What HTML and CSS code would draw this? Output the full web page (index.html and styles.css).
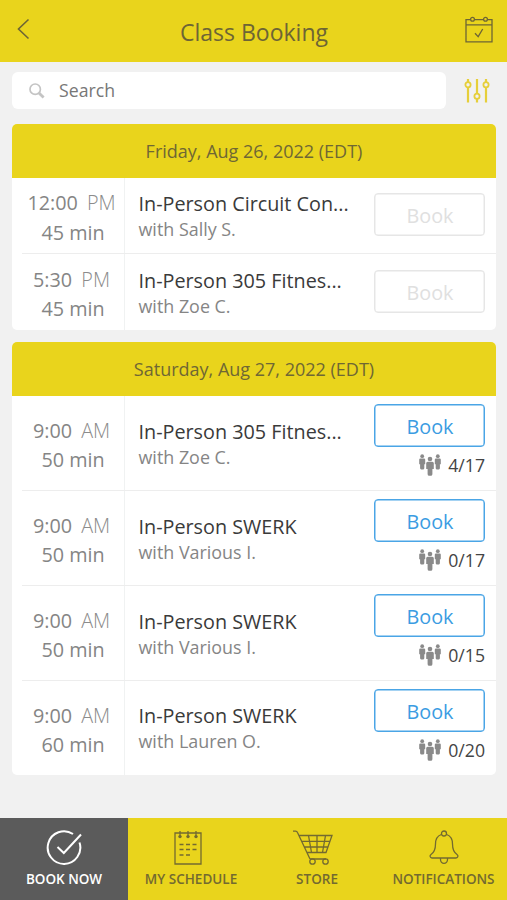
FILE: index.html
```html
<!DOCTYPE html>
<html lang="en">
<head>
<meta charset="utf-8">
<title>Class Booking</title>
<link rel="stylesheet" href="styles.css">
</head>
<body>
<svg class="defs" width="0" height="0">
  <symbol id="people" viewBox="0 0 22 22">
    <g><circle cx="3.2" cy="2.200" r="1.900"/><path d="M1.400 4.400h3.600q1.200 0 1.200 1.200v4.600H5.300V14q0 1.400-1 1.400H2.100q-1 0-1-1.400v-3.800H.200V5.600q0-1.200 1.200-1.200z"/></g>
    <g transform="translate(15.6 0)"><circle cx="3.2" cy="2.200" r="1.900"/><path d="M1.400 4.400h3.600q1.200 0 1.200 1.200v4.600H5.300V14q0 1.400-1 1.400H2.100q-1 0-1-1.400v-3.800H.200V5.600q0-1.200 1.200-1.200z"/></g>
    <circle cx="11" cy="5" r="2.3"/><path d="M8.700 7.800h4.600q1.500 0 1.500 1.500V15h-1.400v5q0 1.800-1.200 1.800H9.800q-1.200 0-1.200-1.800v-5H7.200V9.300q0-1.500 1.500-1.500z"/>
  </symbol>
</svg>
<div class="app">
  <header class="topbar">
    <svg class="back" viewBox="0 0 14 22"><path d="M11.500 1.500 1.500 11l10 9.500"/></svg>
    <h1>Class Booking</h1>
    <svg class="cal" viewBox="0 0 28 28"><path d="M5.500 3.700H1v22.200h26V3.700h-4.500M9.500 3.700h9M1 8.800h26M10 17.200l3.200 3.400 4.500-7.600"/><circle cx="7.500" cy="3.300" r="1.900"/><circle cx="20.500" cy="3.300" r="1.900"/></svg>
  </header>
  <div class="searchrow">
    <div class="search">
      <svg viewBox="0 0 16 16"><circle cx="6.200" cy="6.200" r="5.200"/><path class="handle" d="m10 10 4.600 4.600"/></svg>
      <span>Search</span>
    </div>
    <svg class="filter" viewBox="0 0 26 26"><path d="M4 1v3M4 9.500v15M13 1v14.500M13 21v3.500M22 1v3M22 9.500v15"/><circle cx="4" cy="6.700" r="2.600"/><circle cx="13" cy="18.200" r="2.600"/><circle cx="22" cy="6.700" r="2.600"/></svg>
  </div>
  <section class="card">
    <h2>Friday, Aug 26, 2022 (EDT)</h2>
    <div class="row short">
      <div class="time"><div>12:00 <span class="ampm">PM</span></div><div>45 min</div></div>
      <div class="info"><div class="name">In-Person Circuit Con...</div><div class="who">with Sally S.</div></div>
      <div class="action"><button class="book off">Book</button></div>
    </div>
    <div class="row short">
      <div class="time"><div>5:30 <span class="ampm">PM</span></div><div>45 min</div></div>
      <div class="info"><div class="name">In-Person 305 Fitnes...</div><div class="who">with Zoe C.</div></div>
      <div class="action"><button class="book off">Book</button></div>
    </div>
  </section>
  <section class="card">
    <h2>Saturday, Aug 27, 2022 (EDT)</h2>
    <div class="row">
      <div class="time"><div>9:00 <span class="ampm">AM</span></div><div>50 min</div></div>
      <div class="info"><div class="name">In-Person 305 Fitnes...</div><div class="who">with Zoe C.</div></div>
      <div class="action"><button class="book">Book</button><div class="count"><svg><use href="#people"/></svg>4/17</div></div>
    </div>
    <div class="row">
      <div class="time"><div>9:00 <span class="ampm">AM</span></div><div>50 min</div></div>
      <div class="info"><div class="name">In-Person SWERK</div><div class="who">with Various I.</div></div>
      <div class="action"><button class="book">Book</button><div class="count"><svg><use href="#people"/></svg>0/17</div></div>
    </div>
    <div class="row">
      <div class="time"><div>9:00 <span class="ampm">AM</span></div><div>50 min</div></div>
      <div class="info"><div class="name">In-Person SWERK</div><div class="who">with Various I.</div></div>
      <div class="action"><button class="book">Book</button><div class="count"><svg><use href="#people"/></svg>0/15</div></div>
    </div>
    <div class="row">
      <div class="time"><div>9:00 <span class="ampm">AM</span></div><div>60 min</div></div>
      <div class="info"><div class="name">In-Person SWERK</div><div class="who">with Lauren O.</div></div>
      <div class="action"><button class="book">Book</button><div class="count"><svg><use href="#people"/></svg>0/20</div></div>
    </div>
  </section>
  <nav class="tabs">
    <div class="tab active">
      <svg viewBox="0 0 42 36"><path d="M30 4A16.300 16.300 0 1 0 36.500 12.500" class="thick"/><path class="thick" d="m14.500 17 6.300 6L38 4.500"/></svg>
      <span>BOOK NOW</span>
    </div>
    <div class="tab schedule">
      <svg viewBox="0 0 42 36"><path d="M8 3h26v31H8z"/><path d="M13 1v6M21 1v6M29 1v6M12.500 14.500h4M19 14.500h4M25.500 14.500h4M12.500 19.500h4M19 19.500h4M25.500 19.500h4M12.500 25h4M19 25h4"/><g class="dots"><circle cx="13" cy="6.600" r="1.700"/><circle cx="21" cy="6.600" r="1.700"/><circle cx="29" cy="6.600" r="1.700"/></g></svg>
      <span>MY SCHEDULE</span>
    </div>
    <div class="tab store">
      <svg viewBox="0 0 42 36"><path d="M1 1.200h2.500q1.500 0 2 1.300L18 29M7 5.500h33l-6 17H15M9.500 11.300h28.500M12.200 17h23.800M16.500 5.500l3 17M25 5.500v17M33.500 5.500l-3 17M18 29h16"/><circle cx="20.500" cy="31.500" r="2.700"/><circle cx="33.500" cy="31.500" r="2.700"/></svg>
      <span>STORE</span>
    </div>
    <div class="tab bell">
      <svg viewBox="0 0 42 36"><path d="M18.300 4.500C14 6 12.500 9 12.500 14c0 6-1.500 8.500-4.500 10.500-1.600 1.200-1 3.500 1 3.500h24c2 0 2.600-2.300 1-3.500-3-2-4.500-4.500-4.500-10.500 0-5-1.500-8-5.800-9.500M17.500 28v1.500a3.500 3.800 0 0 0 7 0V28"/><circle cx="21" cy="3.500" r="2.500"/></svg>
      <span>NOTIFICATIONS</span>
    </div>
  </nav>
</div>
</body>
</html>
```
FILE: styles.css
```css
* { box-sizing: border-box; }
body { margin: 0; background: #f1f1f1; font-family: "Open Sans", sans-serif; }
h1, h2 { margin: 0; font-weight: 400; }
svg { display: block; flex: none; fill: none; stroke: currentColor; }
.defs { position: absolute; }
.app { width: 507px; height: 900px; display: flex; flex-direction: column; overflow: hidden; }

.topbar { height: 62px; flex: none; display: flex; align-items: center; justify-content: space-between; padding: 0 14px 0 17px; background: #e9d41c; color: #6d6535; }
.topbar h1 { font-size: 23px; line-height: 32px; padding: 2px 0 0 12px; }
.back { width: 14px; height: 22px; stroke-width: 1.6; margin-bottom: 5px; }
.cal { width: 28px; height: 28px; stroke-width: 1.3; margin-bottom: 2px; }

.searchrow { height: 62px; flex: none; display: flex; align-items: flex-start; padding: 10px 17px 0 12px; justify-content: space-between; }
.search { width: 434px; height: 37px; border-radius: 6px; background: #fff; display: flex; align-items: center; gap: 14px; padding-left: 17px; font-size: 17.700px; color: #777; }
.search span { margin-top: -2px; }
.search svg { width: 16px; height: 16px; color: #c4c4c4; stroke-width: 1.700; margin-top: 1px; }
.search .handle { stroke-width: 2.800; }
.filter { width: 26px; height: 26px; margin-top: 6px; color: #e6cf3a; stroke-width: 2.200; }
.filter circle { stroke-width: 1.800; }

.card { flex: none; width: 484px; margin: 0 0 12px 12px; border-radius: 5px; background: #fff; overflow: hidden; }
.card h2 { height: 54px; line-height: 54px; text-align: center; font-size: 18px; background: #e9d41c; color: #6f6734; }
.row { height: 95px; display: flex; margin-left: 10px; border-bottom: 1px solid #ededed; }
.row.short { height: 76px; }
.row:last-child { border-bottom: 0; }
.row:last-child:not(.short) { height: 94px; }
.time { width: 103px; border-right: 1px solid #f0f2f2; display: flex; flex-direction: column; justify-content: center; text-align: center; font-size: 19.800px; line-height: 29.500px; color: #858585; padding-top: 4px; }
.ampm { font-weight: 300; margin: 0 3px 0 4px; color: #8c8c8c; }
.info { flex: 1; padding: 21px 0 0 13.500px; white-space: nowrap; }
.row:last-child:not(.short) .info { padding-top: 20px; }
.short .info { padding-top: 11px; }
.row.short:last-child .info { padding-top: 12px; }
.name { font-size: 19.800px; line-height: 30px; color: #3a3a3a; }
.who { font-size: 17.900px; line-height: 20px; color: #858585; }
.action { width: 122px; padding: 8px 11px 0 0; }
.short .action { padding-top: 15px; }
.short:last-child .action { padding-top: 16px; }
.book { display: block; width: 111px; height: 43px; padding: 2px 0 0 1px; border: 1px solid #4aa5e6; box-shadow: inset 0 0 0 .5px #4aa5e6; border-radius: 4px; background: #fff; font: 400 19.800px/40px "Open Sans", sans-serif; color: #3b9ce2; }
.book.off { border-color: #e6e6e6; box-shadow: inset 0 0 0 .5px #e6e6e6; color: #e0e0e0; }
.count { display: flex; justify-content: flex-end; align-items: center; gap: 7px; margin-top: 5px; font-size: 17.700px; line-height: 26px; color: #444; }
.count svg { width: 22px; height: 22px; fill: #8a8a8a; stroke: none; }

.tabs { margin-top: auto; height: 82px; flex: none; display: grid; grid-template-columns: 128px 126px 126px 127px; background: #e9d41c; color: #736a30; }
.tab { display: flex; flex-direction: column; align-items: center; padding-top: 12px; font-size: 13.500px; font-weight: 600; line-height: 18px; white-space: nowrap; }
.tab svg { width: 42px; height: 36px; margin-bottom: 4px; stroke-width: 1.300; }
.schedule svg { margin-right: 7px; }
.store svg { margin-right: 8px; }
.tab .thick { stroke-width: 2; }
.tab .dots { fill: currentColor; stroke: none; }
.active { background: #5b5b5b; color: #fff; }
```
